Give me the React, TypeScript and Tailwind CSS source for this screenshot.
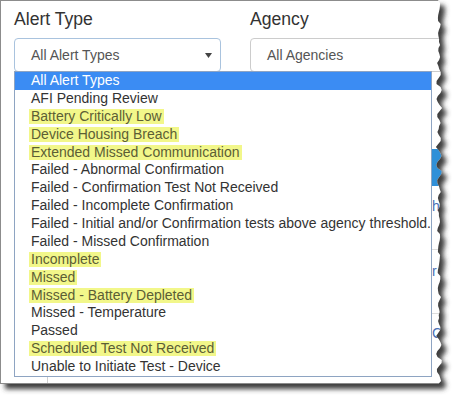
import React from "react";

const items: { t: string; k?: "sel" | "hl" }[] = [
  { t: "All Alert Types", k: "sel" },
  { t: "AFI Pending Review" },
  { t: "Battery Critically Low", k: "hl" },
  { t: "Device Housing Breach", k: "hl" },
  { t: "Extended Missed Communication", k: "hl" },
  { t: "Failed - Abnormal Confirmation" },
  { t: "Failed - Confirmation Test Not Received" },
  { t: "Failed - Incomplete Confirmation" },
  { t: "Failed - Initial and/or Confirmation tests above agency threshold." },
  { t: "Failed - Missed Confirmation" },
  { t: "Incomplete", k: "hl" },
  { t: "Missed", k: "hl" },
  { t: "Missed - Battery Depleted", k: "hl" },
  { t: "Missed - Temperature" },
  { t: "Passed" },
  { t: "Scheduled Test Not Received", k: "hl" },
  { t: "Unable to Initiate Test - Device" },
];

function TornEdge() {
  const pts: [number, number][] = [];
  for (let y = 0; y <= 384; y += 3) {
    const r =
      Math.sin(y * 1.7) * 1.1 +
      Math.sin(y * 0.37) * 1.2 +
      (((y * 37) % 7) - 3) * 0.35;
    pts.push([439 + r, y]);
  }
  const last = pts[pts.length - 1][0];
  const line = pts.map((p) => `${p[0].toFixed(1)},${p[1]}`).join(" L");
  const panel = `M0,0 L${line} L${last.toFixed(1)},384 L0,384 Z`;
  const right = `M${line} L464,384 L464,0 Z`;
  return (
    <svg
      className="absolute left-0 top-0 pointer-events-none"
      width={464}
      height={405}
      viewBox="0 0 464 405"
    >
      <defs>
        <filter id="blur" x="-10%" y="-10%" width="120%" height="120%">
          <feGaussianBlur stdDeviation="2.6" />
        </filter>
        <mask id="outside">
          <rect x="0" y="0" width="464" height="405" fill="white" />
          <path d={panel} fill="black" />
        </mask>
      </defs>
      <path d={right} fill="white" />
      <g mask="url(#outside)">
        <path d={panel} fill="#3c3c3c" transform="translate(5,5)" filter="url(#blur)" />
      </g>
    </svg>
  );
}

export default function App() {
  return (
    <div
      className="relative w-[464px] h-[405px] bg-white overflow-hidden text-[#333]"
      style={{ fontFamily: "'Liberation Sans', Arial, sans-serif" }}
    >
      <div className="relative w-[446px] h-[384px] border-t border-l border-b border-[#8c8c8c] bg-white overflow-hidden">
        <div className="grid grid-cols-[207px_200px] gap-x-[29px] pl-[13px] pt-[6px]">
          <div className="text-[17.6px] leading-[24px]">Alert Type</div>
          <div className="text-[17.6px] leading-[24px]">Agency</div>
          <div className="mt-[7px] h-[34px] rounded-[4px] border border-[#a9c3de] flex items-center pl-[16px] pr-[8px] text-[14px] text-[#555]">
            <span className="flex-1">All Alert Types</span>
            <svg width="7" height="5" viewBox="0 0 7 5">
              <polygon points="0,0 7,0 3.5,5" fill="#444" />
            </svg>
          </div>
          <div className="mt-[7px] h-[34px] rounded-[4px] border border-[#cccccc] flex items-center pl-[16px] text-[14px] text-[#555]">
            All Agencies
          </div>
        </div>

        <div className="flex">
          <div className="w-[431px] shrink-0 h-[312px] flex flex-col justify-end">
            <div className="ml-[46px] w-px h-[8px] bg-[#d0d0d0]" />
          </div>
          <div className="flex flex-col text-[14px] text-[#4a6fb5]">
            <div className="mt-[77px] h-[37px] w-[12px] bg-[#3090d8]" />
            <div className="mt-[10px] leading-[20px]">h</div>
            <div className="mt-[33px] w-[12px] border-t border-[#dddddd]" />
            <div className="mt-[11px] leading-[20px]">r</div>
            <div className="mt-[32px] w-[12px] border-t border-[#dddddd]" />
            <div className="mt-[9px] leading-[20px]">C</div>
          </div>
        </div>

        <div className="absolute left-[13px] top-[70px] w-[418px] border border-[#8ea4c2] bg-white text-[14px]">
          {items.map((it, i) => (
            <div
              key={i}
              className={
                it.k === "sel"
                  ? "h-[17.875px] leading-[17.875px] pl-[16px] bg-[#3b8cf3] text-white whitespace-nowrap"
                  : "h-[17.875px] leading-[17.875px] pl-[16px] text-[#333] whitespace-nowrap"
              }
            >
              {it.k === "hl" ? (
                <span className="inline-block -ml-[2px] px-[2px] h-[15px] leading-[15px] bg-[#f2f78a] text-[#5c5e35]">
                  {it.t}
                </span>
              ) : (
                it.t
              )}
            </div>
          ))}
        </div>
      </div>
      <TornEdge />
    </div>
  );
}
